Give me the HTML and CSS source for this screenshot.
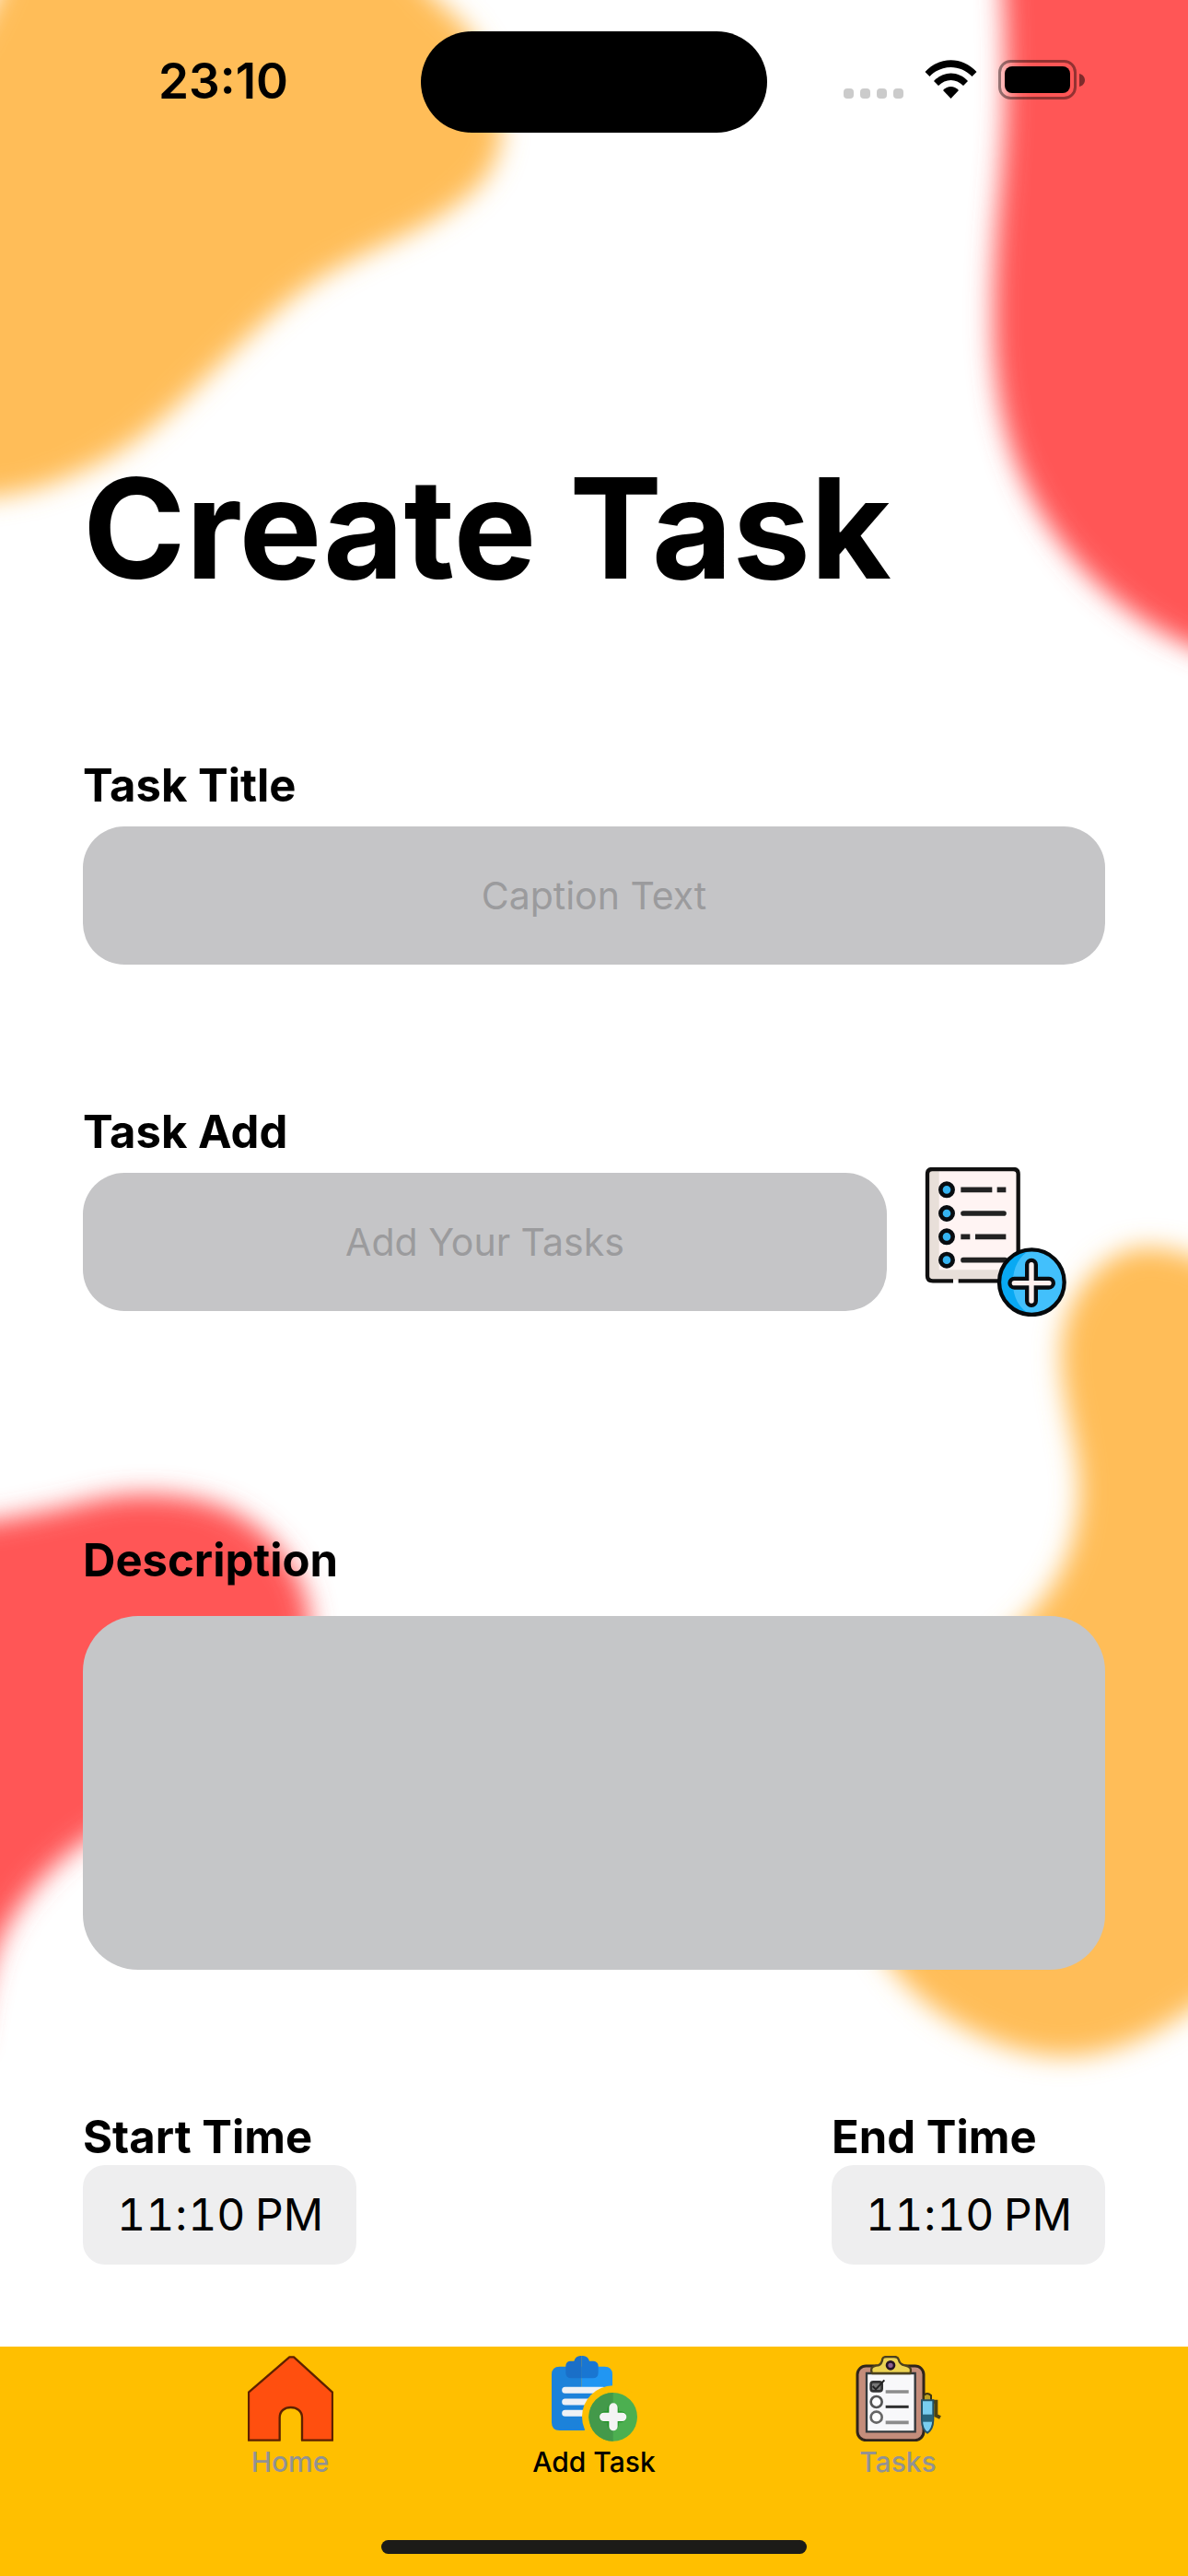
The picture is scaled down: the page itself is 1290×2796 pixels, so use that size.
FILE: index.html
```html
<!DOCTYPE html>
<html lang="en-US">
<head>
<meta charset="utf-8">
<meta name="viewport" content="width=device-width, initial-scale=1">
<title>Create Task</title>
<link rel="stylesheet" href="styles.css">
</head>
<body>
<svg class="backdrop" viewBox="0 0 1290 2796" preserveAspectRatio="xMidYMin slice" aria-hidden="true">
  <defs>
    <filter id="soft" filterUnits="userSpaceOnUse" x="-200" y="-200" width="1690" height="3196"><feGaussianBlur stdDeviation="14"/></filter>
  </defs>
  <g filter="url(#soft)">
    <path fill="#ffbd59" d="M14 -60 C4 -20 -4 10 -60 90 V542 C20 542 58 526 106 503 C166 472 200 431 245 389 C285 350 325 312 368 290 C414 265 462 249 498 220 C532 196 545 168 545 135 C543 85 521 35 476 2 L420 -60 Z"/>
    <path fill="#ff5757" d="M1086 -60 C1092 30 1094 110 1087 190 C1082 250 1077 300 1079 375 C1083 450 1098 505 1132 560 C1167 617 1222 670 1290 700 L1360 731 V-60 Z"/>
    <path fill="#ff5757" d="M-60 1657 C0 1652 60 1639 100 1629 C140 1619 190 1619 233 1633 C290 1653 328 1700 336 1752 C343 1830 290 1880 230 1912 C180 1940 130 1973 90 2000 C58 2022 22 2060 3 2100 C-12 2130 -20 2176 -26 2220 L-60 2220 Z"/>
    <path fill="#ffbd59" d="M1360 1402 C1320 1370 1280 1354 1245 1354 C1204 1354 1153 1400 1152 1470 C1153 1530 1173 1570 1172 1625 C1168 1680 1152 1716 1116 1755 C1050 1815 955 1900 945 2015 C940 2075 946 2105 967 2133 C1012 2194 1094 2231 1155 2232 C1210 2232 1260 2204 1290 2183 L1360 2140 Z"/>
  </g>
</svg>

<header class="status">
  <time class="status-time">23:10</time>
  <div class="island"></div>
  <svg class="status-icons" viewBox="916 64 263 46" aria-label="Wi-Fi on, battery full" role="img">
    <g fill="#cbcbcb">
      <rect x="916" y="96" width="11" height="11" rx="4"/><rect x="934" y="96" width="11" height="11" rx="4"/><rect x="952" y="96" width="11" height="11" rx="4"/><rect x="970" y="96" width="11" height="11" rx="4"/>
    </g>
    <path d="M1004.500 78 C1020 61 1045 61 1060.500 78 L1055.500 83 C1043 69.500 1022 69.500 1009.500 83 Z"/>
    <path d="M1014 88 C1024 76.500 1041 76.500 1051 88 L1046 93 C1038 85 1027 85 1019 93 Z"/>
    <path d="M1024 98 C1029 92.500 1036 92.500 1041 98 L1032.500 107 Z"/>
    <rect x="1085.500" y="66.500" width="82" height="40" rx="12" fill="none" stroke="#000" stroke-opacity=".42" stroke-width="3"/>
    <rect x="1091" y="72" width="71" height="29" rx="8"/>
    <path d="M1172 80 C1180 82 1180 92 1172 94 Z" fill-opacity=".5"/>
  </svg>
</header>

<main class="screen">
  <h1 class="title">Create Task</h1>
  <form class="form">
    <div class="group">
      <label class="label" for="task-title">Task Title</label>
      <input class="field" id="task-title" type="text" placeholder="Caption Text">
    </div>
    <div class="group group-add">
      <label class="label" for="task-add">Task Add</label>
      <div class="add-row">
        <input class="field" id="task-add" type="text" placeholder="Add Your Tasks">
        <button class="add-button" type="button" aria-label="Add task item">
          <svg class="add-icon" viewBox="70 80 465 486">
            <rect x="84" y="86" width="294" height="364" rx="16" fill="#fff4f3"/>
            <path fill="#e8dfd9" d="M88 90 H120 V414 H378 V446 H88 Z"/>
            <path fill="none" stroke="#101010" stroke-width="13" d="M166 450 H100 Q82 450 82 434 V102 Q82 86 98 86 H362 Q378 86 378 102 V360 M183 450 H330"/>
            <g fill="#35b4f2" stroke="#080c10" stroke-width="14">
              <circle cx="145" cy="153" r="20"/><circle cx="145" cy="230" r="20"/><circle cx="145" cy="306" r="20"/><circle cx="145" cy="382" r="20"/>
            </g>
            <path stroke="#222" stroke-width="17" d="M191 153 H293 M309 153 H338 M191 306 H221 M238 306 H338"/>
            <path stroke="#222" stroke-width="17" stroke-linecap="round" d="M199 230 H331 M199 382 H335"/>
            <circle cx="422" cy="454" r="106" fill="#42c0fc"/>
            <path fill="#09a9f3" d="M422 348 A106 106 0 0 0 422 560 C340 530 340 380 422 348 Z"/>
            <circle cx="422" cy="454" r="106" fill="none" stroke="#05090c" stroke-width="13"/>
            <path fill="none" stroke="#080c10" stroke-width="42" stroke-linecap="round" d="M421 397 V515 M365 457 H478"/>
            <path fill="none" stroke="#fff0ee" stroke-width="16" stroke-linecap="round" d="M421 397 V515 M365 457 H478"/>
          </svg>
        </button>
      </div>
    </div>
    <div class="group group-description">
      <label class="label" for="description">Description</label>
      <textarea class="field field-area" id="description"></textarea>
    </div>
    <div class="times">
      <div class="group">
        <label class="label" for="start-time">Start Time</label>
        <input class="time" id="start-time" type="time" value="23:10">
      </div>
      <div class="group">
        <label class="label" for="end-time">End Time</label>
        <input class="time" id="end-time" type="time" value="23:10">
      </div>
    </div>
  </form>
</main>

<footer class="tabbar">
  <nav class="tabs">
    <a class="tab" href="#home">
      <svg class="tab-icon" viewBox="81 51 279 279" aria-hidden="true">
        <path fill="#ff4f0f" stroke="#5e2100" stroke-width="7" stroke-linejoin="round" d="M84 170 L217 55 H231 L357 170 V326 H258 V252 C258 230 240 219 221 219 C202 219 185 230 185 252 V326 H84 Z"/>
      </svg>
      Home
    </a>
    <a class="tab tab-current" href="#add" aria-current="page">
      <svg class="tab-icon" viewBox="114 51 279 279" aria-hidden="true">
        <path fill="#1c82da" d="M140 86 H212 V294 H140 Q114 294 114 268 V112 Q114 86 140 86 Z"/>
        <path fill="#2196f3" d="M212 86 H286 Q312 86 312 112 V160 H212 Z"/>
        <path fill="#1b84dc" d="M205 160 H250 V294 H205 Z"/>
        <path fill="#1a6fc8" d="M212 51 H208 Q192 52 187 68 H174 Q160 70 160 84 V106 Q160 124 178 124 H212 Z"/>
        <path fill="#1976d2" d="M212 51 H216 Q232 52 237 68 H250 Q266 70 266 84 V106 Q266 124 248 124 H212 Z"/>
        <path stroke="#eef1f5" stroke-width="21" stroke-linecap="round" d="M158 163 H280 M158 201 H240 M158 238 H220"/>
        <circle cx="314" cy="249" r="101" fill="#ffbf00"/>
        <path fill="#ffbf00" d="M222 290 H260 V330 H216 Z"/>
        <circle cx="314" cy="250" r="79" fill="#4caf50"/>
        <path fill="#43994a" d="M314 171 A79 79 0 0 0 314 329 Z"/>
        <path stroke="#1f9424" stroke-width="36" stroke-linecap="round" d="M314 224 V276 M288 250 H340"/>
        <path stroke="#f4f4f4" stroke-width="28" stroke-linecap="round" d="M315 219 V281 M284 250 H344"/>
      </svg>
      Add Task
    </a>
    <a class="tab" href="#tasks">
      <svg class="tab-icon" viewBox="84 51 279 279" aria-hidden="true">
        <rect x="90" y="84" width="216" height="242" rx="28" fill="#c48d7b" stroke="#30251c" stroke-width="9"/>
        <path fill="#f8f8fa" stroke="#33383b" stroke-width="7" d="M120 108 H278 V298 H120 Z"/>
        <path fill="#ecd352" stroke="#4d411c" stroke-width="7" stroke-linejoin="round" d="M138 108 Q128 84 158 82 Q170 78 172 60 Q174 54 186 54 H210 Q222 54 224 62 Q228 79 244 82 Q270 86 262 108 Z"/>
        <circle cx="198" cy="82" r="12" fill="#8c6090" stroke="#251425" stroke-width="8"/>
        <rect x="134" y="136" width="36" height="30" rx="8" fill="#777" stroke="#333" stroke-width="8"/>
        <path fill="none" stroke="#222" stroke-width="6" d="M140 150 L150 160 L178 130"/>
        <circle cx="152" cy="201" r="18" fill="#fff" stroke="#555" stroke-width="8"/>
        <circle cx="152" cy="251" r="18" fill="#fff" stroke="#666" stroke-width="8"/>
        <path stroke="#8c8c8c" stroke-width="11" d="M182 168 H257 M182 268 H257"/>
        <path stroke="#303030" stroke-width="9" d="M182 217 H257"/>
        <path fill="none" stroke="#4b4113" stroke-width="12" d="M330 200 H346 V245 L360 252"/>
        <path fill="#bda126" stroke="#3b3312" stroke-width="6" d="M306 198 V180 Q317 168 330 180 V198 Z"/>
        <path fill="#78cdf0" stroke="#234f63" stroke-width="6" d="M300 196 H337 V260 Q336 290 318 302 Q300 290 300 260 Z"/>
        <path fill="#27647c" d="M302 242 H336 V266 H302 Z"/>
      </svg>
      Tasks
    </a>
  </nav>
  <div class="home-indicator"></div>
</footer>
</body>
</html>
```
FILE: styles.css
```css
* {
  box-sizing: border-box;
}

body {
  position: relative;
  display: flex;
  flex-direction: column;
  min-height: 100vh;
  margin: 0;
  overflow-x: hidden;
  background: #fff;
  color: #000;
  font-family: Inter, "Liberation Sans", sans-serif;
}

.backdrop {
  position: absolute;
  inset: 0;
  z-index: -1;
  width: 100%;
  height: 100%;
}

.status {
  display: grid;
  grid-template-columns: 1fr 376px 1fr;
  align-items: start;
  padding: 34px 28px 0;
}

.status-time {
  justify-self: center;
  font-size: 53px;
  font-weight: 600;
  line-height: 108px;
}

.island {
  height: 110px;
  border-radius: 55px;
  background: #000;
}

.status-icons {
  justify-self: center;
  width: 263px;
  height: 46px;
  margin-top: 30px;
}

.screen {
  flex: 1;
  padding: 336px 90px 89px;
}

.title {
  margin: 0 0 157px;
  font-size: 151px;
  font-weight: 700;
  line-height: 186px;
}

.form {
  display: flex;
  flex-direction: column;
  gap: 152px;
}

.group {
  display: flex;
  flex-direction: column;
  gap: 14px;
}

.group-add {
  gap: 8px;
}

.group-description {
  gap: 30px;
  margin-top: 83px;
}

.label {
  font-size: 49px;
  font-weight: 700;
  line-height: 60px;
}

.field {
  width: 100%;
  height: 150px;
  padding: 0 40px;
  border: 0;
  border-radius: 45px;
  background: #c5c5c7;
  color: #000;
  font: 400 41px/60px Inter, "Liberation Sans", sans-serif;
  text-align: center;
}

.field::placeholder {
  color: #9b9b9d;
  opacity: 1;
}

.field-area {
  display: block;
  height: 384px;
  padding: 40px;
  border-radius: 60px;
  background: #c5c6c8;
  text-align: left;
  resize: none;
}

.add-row {
  display: flex;
  align-items: center;
  gap: 40px;
}

.add-row .field {
  flex: 1;
  width: auto;
  min-width: 0;
}

.add-button {
  width: 197px;
  padding: 0;
  border: 0;
  background: none;
  text-align: left;
}

.add-icon {
  display: block;
  width: 155px;
  height: 162px;
}

.times {
  display: flex;
  justify-content: space-between;
}

.times .group {
  gap: 0;
}

.time {
  width: 297px;
  height: 108px;
  padding: 0 0 0 36px;
  border: 0;
  border-radius: 24px;
  background: #eeeeef;
  color: #000;
  font: 400 48px/60px Inter, "Liberation Sans", sans-serif;
  font-variant-numeric: tabular-nums;
}

.time::-webkit-calendar-picker-indicator {
  display: none;
}

.tabbar {
  display: flex;
  flex-direction: column;
  align-items: center;
  gap: 67px;
  padding: 10px 0 24px;
  background: #ffbf00;
}

.tabs {
  display: flex;
  justify-content: center;
  width: 100%;
}

.tab {
  display: flex;
  flex: 0 1 330px;
  flex-direction: column;
  align-items: center;
  gap: 4px;
  color: #929292;
  font-size: 30px;
  font-weight: 500;
  line-height: 36px;
  text-decoration: none;
}

.tab-current {
  color: #000;
}

.tab-icon {
  width: 93px;
  height: 93px;
}

.home-indicator {
  width: 462px;
  height: 15px;
  border-radius: 8px;
  background: #1c1b18;
}
```
